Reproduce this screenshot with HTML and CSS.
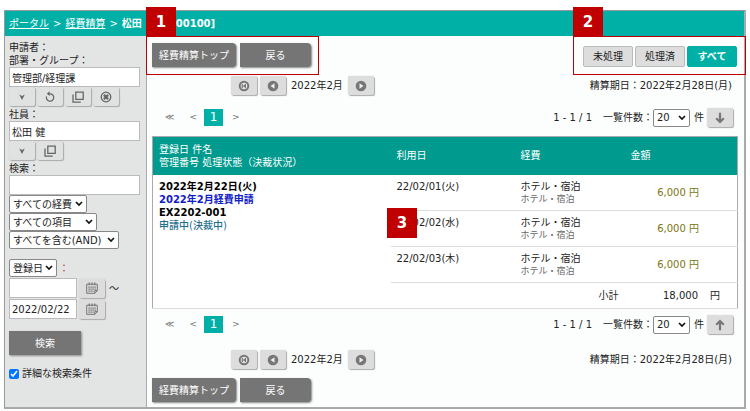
FILE: index.html
```html
<!DOCTYPE html>
<html lang="ja">
<head>
<meta charset="utf-8">
<title>経費精算</title>
<link rel="stylesheet" href="styles.css">
</head>
<body>
<svg class="defs" aria-hidden="true">
  <symbol id="i-down" viewBox="0 0 12 12"><path d="M3.2 3.6L6 5l2.8-1.4L6 9z" fill="#666"/></symbol>
  <symbol id="i-undo" viewBox="0 0 12 12"><path d="M5 2.8h1a3.7 3.7 0 1 1-3.5 2.6" fill="none" stroke="#666" stroke-width="1.2"/><path d="M5.6.3v4.8L2.8 2.7z" fill="#666"/></symbol>
  <symbol id="i-copy" viewBox="0 0 12 12"><path d="M3.8 1.2h7.4v7.2H3.8zM1 3.4v7.8h7.8" fill="none" stroke="#666" stroke-width="1.3"/></symbol>
  <symbol id="i-clear" viewBox="0 0 12 12"><circle cx="6" cy="6" r="4.8" fill="#ddd" stroke="#666" stroke-width="1.3"/><path d="M3.9 3.9l4.2 4.2M8.1 3.9L3.9 8.1" stroke="#666" stroke-width="2.2"/></symbol>
  <symbol id="i-cal" viewBox="0 0 12 12"><path d="M.7 2.2h10.6v6.6l-2.4 2.5H.7zM11.3 8.6H8.8v2.7" fill="none" stroke="#777"/><path d="M3.2.4v2.8M6 .4v2.8M8.8.4v2.8" stroke="#777" stroke-width="1.2"/><path d="M2.4 5.2h7.4M2.4 7.2h7.4M2.4 9.2h5.2" stroke="#777" stroke-width="1.2" stroke-dasharray="1.4 .6"/></symbol>
  <symbol id="i-first" viewBox="0 0 12 12"><circle cx="6" cy="6" r="4.3" fill="#e6e6e6" stroke="#777" stroke-width="2"/><path d="M8 3.6v4.8L4.9 6zM3.7 3.8h1.2v4.4H3.7z" fill="#777"/></symbol>
  <symbol id="i-prev" viewBox="0 0 12 12"><circle cx="6" cy="6" r="5.3" fill="#777"/><path d="M7.5 3.2v5.6L3.6 6z" fill="#eee"/></symbol>
  <symbol id="i-next" viewBox="0 0 12 12"><circle cx="6" cy="6" r="5.3" fill="#777"/><path d="M4.5 3.2v5.6L8.4 6z" fill="#eee"/></symbol>
  <symbol id="i-arrow-down" viewBox="0 0 12 12"><path d="M6 .8v9M2.2 6.2L6 10l3.8-3.8" fill="none" stroke="#777" stroke-width="2.2"/></symbol>
  <symbol id="i-arrow-up" viewBox="0 0 12 12"><path d="M6 11.2v-9M2.2 5.8L6 2l3.8 3.8" fill="none" stroke="#777" stroke-width="2.2"/></symbol>
</svg>

<div class="window">
  <header class="crumbs">
    <a href="#">ポータル</a><span>&gt;</span><a href="#">経費精算</a><span>&gt;</span><strong>松田</strong><strong class="code">00100]</strong>
  </header>

  <div class="body">
    <form class="side">
      <div class="label">申請者：</div>
      <label class="label" for="group">部署・グループ：</label>
      <input class="box" type="text" id="group" value="管理部/経理課">
      <div class="icons">
        <button type="button" class="icon" aria-label="選択"><svg><use href="#i-down"/></svg></button>
        <button type="button" class="icon" aria-label="元に戻す"><svg><use href="#i-undo"/></svg></button>
        <button type="button" class="icon" aria-label="別画面"><svg><use href="#i-copy"/></svg></button>
        <button type="button" class="icon" aria-label="クリア"><svg><use href="#i-clear"/></svg></button>
      </div>
      <label class="label" for="staff">社員：</label>
      <input class="box" type="text" id="staff" value="松田 健">
      <div class="icons">
        <button type="button" class="icon" aria-label="選択"><svg><use href="#i-down"/></svg></button>
        <button type="button" class="icon" aria-label="別画面"><svg><use href="#i-copy"/></svg></button>
      </div>
      <label class="label" for="query">検索：</label>
      <input class="box" type="text" id="query">
      <select class="w-cost" aria-label="経費"><option>すべての経費</option></select>
      <select class="w-item" aria-label="項目"><option>すべての項目</option></select>
      <select class="w-match" aria-label="検索方法"><option>すべてを含む(AND)</option></select>

      <div class="dates">
        <div class="line"><select class="w-date" id="datekind" aria-label="日付の種類"><option>登録日</option></select><label class="colon" for="datekind">：</label></div>
        <div class="line"><input class="box date" type="text" aria-label="開始日"><button type="button" class="icon" aria-label="カレンダー"><svg><use href="#i-cal"/></svg></button><span class="tilde">～</span></div>
        <div class="line"><input class="box date" type="text" aria-label="終了日" value="2022/02/22"><button type="button" class="icon" aria-label="カレンダー"><svg><use href="#i-cal"/></svg></button></div>
      </div>
      <button type="button" class="dark search">検索</button>
      <label class="check"><input type="checkbox" checked>詳細な検索条件</label>
    </form>

    <main class="main">
      <div class="toolbar">
        <div class="actions"><button class="dark top">経費精算トップ</button><button class="dark back">戻る</button></div>
        <div class="filters"><button>未処理</button><button>処理済</button><button class="on">すべて</button></div>
      </div>

      <div class="month">
        <button class="icon" aria-label="最初"><svg><use href="#i-first"/></svg></button>
        <button class="icon" aria-label="前月"><svg><use href="#i-prev"/></svg></button>
        <span class="name">2022年2月</span>
        <button class="icon" aria-label="翌月"><svg><use href="#i-next"/></svg></button>
        <span class="due">精算期日：2022年2月28日(月)</span>
      </div>

      <div class="pager">
        <nav><a href="#">≪</a><a href="#">&lt;</a><b>1</b><a href="#">&gt;</a></nav>
        <span class="range">1 - 1 / 1</span>
        <label for="size1">一覧件数：</label><select class="w-size" id="size1"><option>20</option></select>
        <span class="unit">件</span>
        <button class="icon" aria-label="下へ"><svg><use href="#i-arrow-down"/></svg></button>
      </div>

      <table>
        <colgroup><col class="c-title"><col class="c-day"><col class="c-cost"><col></colgroup>
        <thead>
          <tr><th>登録日 件名<br>管理番号 処理状態（決裁状況）</th><th>利用日</th><th>経費</th><th>金額</th></tr>
        </thead>
        <tbody>
          <tr>
            <td class="summary" rowspan="4"><strong>2022年2月22日(火)</strong><a href="#">2022年2月経費申請</a><strong>EX2202-001</strong><span>申請中(決裁中)</span></td>
            <td>22/02/01(火)</td><td>ホテル・宿泊<small>ホテル・宿泊</small></td><td class="amount">6,000 円</td>
          </tr>
          <tr><td>22/02/02(水)</td><td>ホテル・宿泊<small>ホテル・宿泊</small></td><td class="amount">6,000 円</td></tr>
          <tr><td>22/02/03(木)</td><td>ホテル・宿泊<small>ホテル・宿泊</small></td><td class="amount">6,000 円</td></tr>
          <tr class="total"><td colspan="2">小計</td><td>18,000<span>円</span></td></tr>
        </tbody>
      </table>

      <div class="pager">
        <nav><a href="#">≪</a><a href="#">&lt;</a><b>1</b><a href="#">&gt;</a></nav>
        <span class="range">1 - 1 / 1</span>
        <label for="size2">一覧件数：</label><select class="w-size" id="size2"><option>20</option></select>
        <span class="unit">件</span>
        <button class="icon" aria-label="上へ"><svg><use href="#i-arrow-up"/></svg></button>
      </div>

      <div class="month lower">
        <button class="icon" aria-label="最初"><svg><use href="#i-first"/></svg></button>
        <button class="icon" aria-label="前月"><svg><use href="#i-prev"/></svg></button>
        <span class="name">2022年2月</span>
        <button class="icon" aria-label="翌月"><svg><use href="#i-next"/></svg></button>
        <span class="due">精算期日：2022年2月28日(月)</span>
      </div>
      <div class="actions"><button class="dark top">経費精算トップ</button><button class="dark back">戻る</button></div>
    </main>
  </div>

  <div class="frame frame-1"><span class="badge">1</span></div>
  <div class="frame frame-2"><span class="badge">2</span></div>
  <span class="badge badge-3">3</span>
</div>
</body>
</html>
```
FILE: styles.css
```css
* { box-sizing: border-box; }

body {
  margin: 0;
  padding: 10px 4px 2px;
  background: #fff;
  color: #222;
  font: 10px/13px "DejaVu Sans", "Noto Sans CJK JP", sans-serif;
}

button, input, select { font: inherit; color: inherit; margin: 0; }

.defs { display: none; }

.window {
  position: relative;
  border: 1px solid #999;
  border-right: 2px solid #aaa;
  border-bottom: 2px solid #aaa;
}

.crumbs {
  display: flex;
  align-items: center;
  gap: 4px;
  height: 25px;
  padding: 0 4px;
  background: #00b0a6;
  color: #fff;
}
.crumbs a { color: #fff; }
.crumbs .code { margin-left: 30px; }

.body { display: flex; }

/* Search panel */
.side {
  flex: 0 0 142px;
  padding: 5px 6px 16px 4px;
  border-right: 1px solid #aaa;
  background: #e3e5e4;
}
.label { display: block; height: 13px; }
.box {
  display: block;
  width: 100%;
  height: 20px;
  padding: 0 2px;
  border: 1px solid #bbb;
  background: #fff;
}
.icons { display: flex; gap: 2px; padding: 0 0 2px; }
.icon {
  display: flex;
  align-items: center;
  justify-content: center;
  flex: none;
  width: 26px;
  height: 19px;
  padding: 0;
  border: 0;
  border-radius: 2px;
  background: #ddd;
  box-shadow: 1px 1px 1px #aaa, 0 0 1px #bbb;
}
.icon svg { width: 12px; height: 12px; }
.icons .icon { background: #e0e1e1; }

select {
  display: block;
  height: 18px;
  padding: 0 0 0 3px;
  border: 1px solid #888;
  border-radius: 2px;
  appearance: none;
  background: #fff url("data:image/svg+xml,%3Csvg xmlns='http://www.w3.org/2000/svg' width='8' height='6'%3E%3Cpath d='M1 1l3 3 3-3' fill='none' stroke='%23111' stroke-width='1.7'/%3E%3C/svg%3E") no-repeat right 3px center;
}
.w-cost { width: 78px; }
.w-item { width: 88px; }
.w-match { width: 110px; }
.w-date { width: 48px; }
.w-size { width: 37px; }

.dates { display: flex; flex-direction: column; gap: 1px; margin-top: 10px; }
.line { display: flex; align-items: center; gap: 2px; }
.line .date { width: 68px; }
.colon { color: #b33; }
.tilde { margin-left: 2px; }

.dark {
  height: 24px;
  padding: 0;
  border: 0;
  background: #757575;
  box-shadow: 1px 1px 2px #888;
  color: #fff;
}
.search { width: 72px; margin-top: 12px; }
.check { display: flex; align-items: center; gap: 3px; margin-top: 12px; }
.check input { width: 10px; height: 10px; }

/* List */
.main { flex: 1; min-width: 0; padding: 7px 6px 5px 5px; background: #fcfefd; }

.toolbar { display: flex; justify-content: space-between; }
.actions { display: flex; gap: 4px; }
.actions .dark { border-radius: 0 4px 4px 0; }
.top { width: 84px; }
.back { width: 71px; }

.filters { display: flex; gap: 2px; padding: 3px 1px 0 0; }
.filters button {
  width: 50px;
  height: 21px;
  padding: 0;
  border: 1px solid #bbb;
  border-radius: 2px;
  background: #ddd;
}
.filters .on { border-color: #00b0a6; background: #00b0a6; color: #fff; font-weight: bold; }

.month {
  display: flex;
  align-items: center;
  gap: 3px;
  margin-top: 9px;
  padding: 0 6px 0 79px;
}
.month .name { margin: 0 2px; }
.due { margin-left: auto; }

.pager { display: flex; align-items: center; margin: 13px 5px 9px 13px; }
.pager nav { display: flex; align-items: center; flex: 1; gap: 7px; }
.pager nav a { color: #777; font-size: 9px; text-decoration: none; }
.pager nav a:first-child { margin-right: 8px; }
.pager nav b {
  width: 19px;
  height: 17px;
  margin-right: 2px;
  background: #00b0a6;
  color: #fff;
  line-height: 17px;
  text-align: center;
  font-weight: normal;
  font-size: 12px;
}
.range { margin-right: 11px; }
.unit { margin: 0 3px 0 4px; }

table {
  width: 100%;
  table-layout: fixed;
  border: 1px solid #aaa;
  border-collapse: collapse;
  background: #fff;
}
.c-title { width: 238px; }
.c-day { width: 124px; }
.c-cost { width: 110px; }
th {
  height: 38px;
  padding: 0 6px;
  background: #009a8e;
  color: #fff;
  font-weight: normal;
  text-align: left;
}
td {
  height: 36px;
  padding: 5px 6px;
  border-bottom: 1px solid #ddd;
  line-height: 13px;
  vertical-align: top;
}
td small { display: block; color: #666; font-size: 9px; line-height: 12px; }
.summary > * { display: block; }
.summary strong { color: #000; }
.summary a { color: #1020c8; font-weight: bold; text-decoration: none; }
.summary span { color: #1f6f8f; font-weight: 500; }
.amount { padding: 0 38px 0 0; color: #7a7410; text-align: right; vertical-align: middle; }
.total td { height: 26px; text-align: right; vertical-align: middle; }
.total td:last-child { padding-right: 17px; }
.total span { margin-left: 12px; }

table + .pager { margin-top: 6px; margin-bottom: 0; }
.lower { margin: 16px 0 9px; }

/* Callouts over the screen */
.frame { position: absolute; top: 25px; height: 39px; border: 1px solid #c00000; }
.frame-1 { left: 141px; width: 173px; }
.frame-2 { right: -2px; width: 173px; }
.badge {
  position: absolute;
  left: -1px;
  bottom: 100%;
  width: 30px;
  height: 30px;
  background: #c00000;
  color: #fff;
  font: bold 15px/30px "DejaVu Sans", sans-serif;
  text-align: center;
}
.badge-3 { left: 382px; top: 197px; bottom: auto; }
```
